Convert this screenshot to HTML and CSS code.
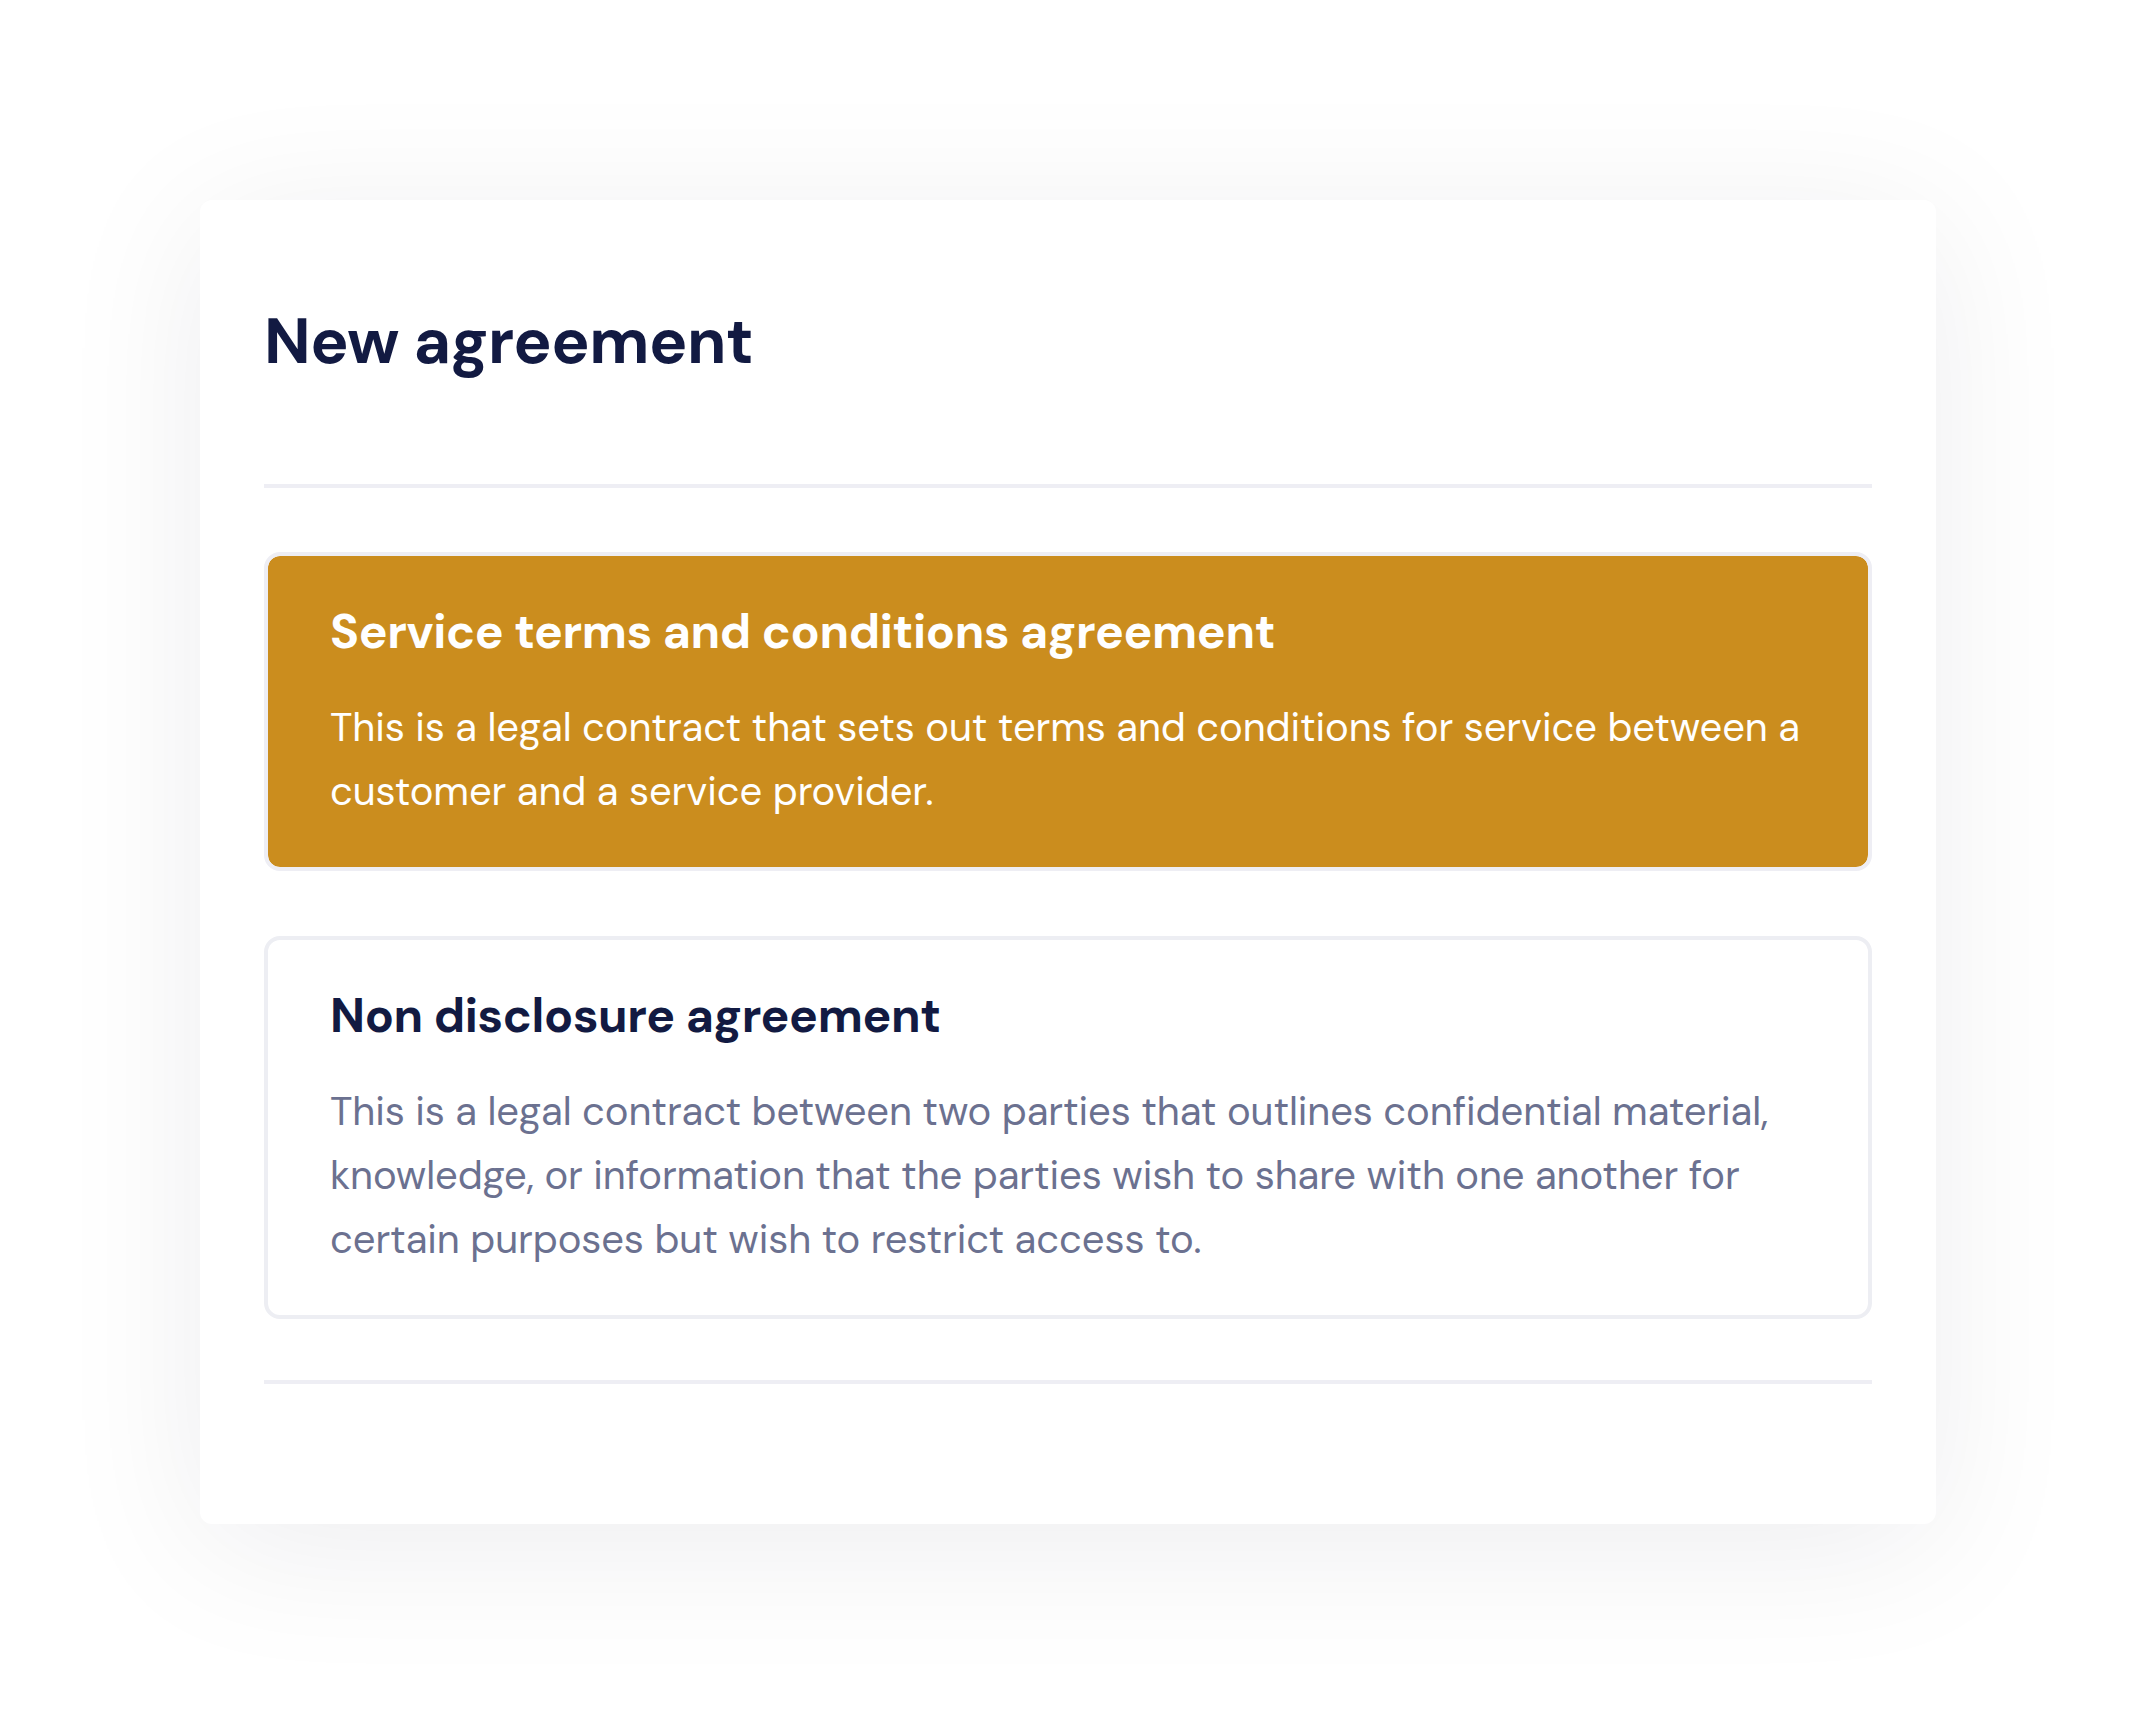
FILE: index.html
```html
<!DOCTYPE html>
<html lang="en">
<head>
<meta charset="utf-8">
<title>New agreement</title>
<link rel="stylesheet" href="styles.css">
</head>
<body>
<main class="page">
  <section class="panel">
    <h1 class="panel-title">New agreement</h1>
    <hr class="divider">
    <div class="options">
      <div class="option option--selected">
        <h2 class="option-title">Service terms and conditions agreement</h2>
        <p class="option-text">This is a legal contract that sets out terms and conditions for service between a customer and a service provider.</p>
      </div>
      <div class="option">
        <h2 class="option-title">Non disclosure agreement</h2>
        <p class="option-text">This is a legal contract between two parties that outlines confidential material, knowledge, or information that the parties wish to share with one another for certain purposes but wish to restrict access to.</p>
      </div>
    </div>
    <hr class="divider divider--bottom">
  </section>
</main>
</body>
</html>
```
FILE: styles.css
```css
* { box-sizing: border-box; }
html, body { margin: 0; padding: 0; background: #ffffff; }
body {
  font-family: "DM Sans", Inter, "Liberation Sans", sans-serif;
  color: #121a42;
}
.page {
  padding: 200px 200px 200px 200px;
}
.panel {
  background: #ffffff;
  border-radius: 12px;
  padding: 102px 64px 140px 64px;
  box-shadow: 0 22px 150px rgba(20, 20, 40, 0.075);
}
.panel-title {
  margin: 0;
  font-size: 64px;
  line-height: 80px;
  font-weight: 700;
  letter-spacing: -0.5px;
  color: #121a42;
}
.divider {
  margin: 102px 0 0 0;
  border: 0;
  height: 4px;
  background: #eeeef4;
}
.divider--bottom {
  margin-top: 61px;
}
.options {
  margin-top: 64px;
  display: flex;
  flex-direction: column;
  gap: 65px;
}
.option {
  border: 4px solid #edeef3;
  border-radius: 16px;
  padding: 46px 52px 44px 62px;
  background: #ffffff;
}
.option--selected {
  background: #cb8d1e;
  background-clip: padding-box;
  border-color: #eeeef4;
}
.option-title {
  margin: 0;
  font-size: 48px;
  line-height: 60px;
  font-weight: 700;
  letter-spacing: -0.36px;
  color: #121a42;
}
.option-text {
  margin: 33px 0 0 0;
  font-size: 40px;
  line-height: 64px;
  font-weight: 400;
  letter-spacing: -0.1px;
  color: #6b7190;
}
.option--selected .option-title,
.option--selected .option-text {
  color: #ffffff;
}
```
